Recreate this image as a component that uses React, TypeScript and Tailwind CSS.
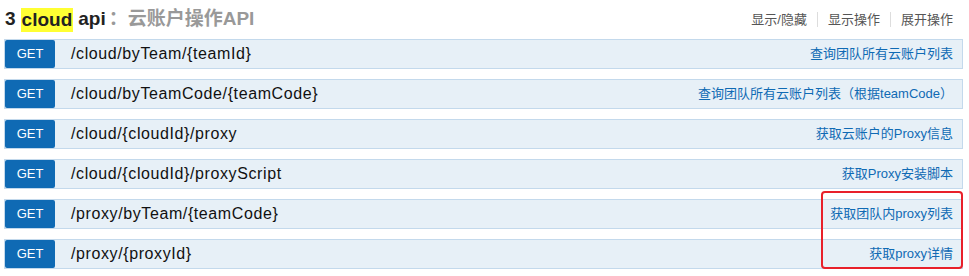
import React from 'react';

const endpoints = [
  { path: '/cloud/byTeam/{teamId}', desc: '查询团队所有云账户列表' },
  { path: '/cloud/byTeamCode/{teamCode}', desc: '查询团队所有云账户列表（根据teamCode）' },
  { path: '/cloud/{cloudId}/proxy', desc: '获取云账户的Proxy信息' },
  { path: '/cloud/{cloudId}/proxyScript', desc: '获取Proxy安装脚本' },
  { path: '/proxy/byTeam/{teamCode}', desc: '获取团队内proxy列表' },
  { path: '/proxy/{proxyId}', desc: '获取proxy详情' },
];

const font = { fontFamily: '"Liberation Sans", "Noto Sans CJK SC", sans-serif' };

export default function App() {
  return (
    <div className="w-[969px] h-[276px] bg-white overflow-hidden relative" style={font}>
      {/* Section header */}
      <div className="flex items-center justify-between h-[39px] pl-[5px] pr-[16px]">
        <h2 className="text-[19px] font-bold text-[#222] flex items-center">
          <span>3</span>
          <span className="bg-[#ffff33] px-[1px] mx-[5px] leading-[24px]">cloud</span>
          <span>api</span>
          <span className="text-[#999] ml-[3px]">：云账户操作API</span>
        </h2>
        <ul className="flex items-center text-[13px] text-[#555]">
          <li className="pr-[10px] border-r border-[#ddd] leading-[15px]">显示/隐藏</li>
          <li className="px-[10px] border-r border-[#ddd] leading-[15px]">显示操作</li>
          <li className="pl-[10px] leading-[15px]">展开操作</li>
        </ul>
      </div>

      {/* Operations */}
      <div className="flex flex-col gap-[10px] pl-[4px] pr-[6px]">
        {endpoints.map((e) => (
          <div
            key={e.path}
            className="flex items-center h-[30px] border border-[#c3d9ec] bg-[#e7f0f7]"
          >
            <span className="w-[50px] h-[28px] bg-[#0f6ab4] rounded-[2px] text-white text-[13px] flex items-center justify-center">
              GET
            </span>
            <span className="ml-[16px] text-[16px] tracking-[0.6px] text-[#111] flex-1">{e.path}</span>
            <span className="pr-[9px] text-[13px] text-[#0f6ab4]">{e.desc}</span>
          </div>
        ))}
      </div>

      {/* Annotation box */}
      <div className="absolute left-[821px] top-[191px] w-[142px] h-[78px] border-2 border-[#e8202a] rounded-[4px] pointer-events-none" />
    </div>
  );
}
